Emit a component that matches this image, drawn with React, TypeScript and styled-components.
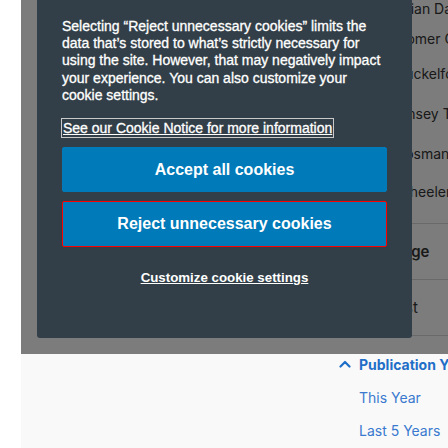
import React from "react";
import styled, { createGlobalStyle } from "styled-components";

const GlobalStyle = createGlobalStyle`
  html, body { margin: 0; padding: 0; }
  body { font-family: Inter, "Noto Sans", sans-serif; background: #ffffff; }
`;

const Page = styled.div`
  display: flex;
  width: 448px;
  height: 448px;
  overflow: hidden;
  background: #ffffff;
`;

const Gutter = styled.div`
  width: 21px;
  flex: none;
`;

const Main = styled.div`
  position: relative;
  flex: 1;
  display: flex;
  justify-content: flex-end;
  background: #f9f9f9;
`;

const Sidebar = styled.div`
  width: 109px;
  flex: none;
  display: flex;
  flex-direction: column;
`;

const NameList = styled.ul`
  list-style: none;
  margin: 0;
  padding: 0 0 0 57px;
  height: 223px;
  overflow: hidden;
`;

const Name = styled.li<{ $top: number }>`
  margin-top: ${(p) => p.$top}px;
  font-size: 14px;
  line-height: 17px;
  color: #333333;
  white-space: nowrap;
`;

const Row = styled.div<{ $bold?: boolean }>`
  height: 55px;
  border-top: 1px solid #d2d2d2;
  display: flex;
  align-items: center;
  padding-left: 54px;
  font-size: 15px;
  font-weight: ${(p) => (p.$bold ? 600 : 400)};
  color: #333333;
  white-space: nowrap;
`;

const LastRow = styled.div`
  height: 19px;
  border-top: 1px solid #d2d2d2;
`;

const FacetHeader = styled.div`
  display: flex;
  align-items: center;
  gap: 8px;
  height: 18px;
  font-size: 14px;
  font-weight: 700;
  color: #1f6fc8;
  white-space: nowrap;
  svg { flex: none; }
`;

const FacetItem = styled.div`
  padding-left: 20px;
  margin-top: 16px;
  font-size: 14px;
  line-height: 17px;
  color: #3a79cf;
  white-space: nowrap;
`;

const Overlay = styled.div`
  position: absolute;
  top: 0;
  left: 0;
  right: 0;
  height: 354px;
  background: rgba(0, 0, 0, 0.5);
  padding-left: 16px;
  box-sizing: border-box;
`;

const Dialog = styled.div`
  width: 375px;
  height: 338px;
  box-sizing: border-box;
  background: #333f48;
  border-radius: 0 0 3px 3px;
  padding: 18px 25px 0;
  display: flex;
  flex-direction: column;
  align-items: stretch;
  font-family: "Liberation Sans", Arial, sans-serif;
`;

const Text = styled.p`
  margin: 0;
  font-size: 14px;
  line-height: 17.2px;
  color: #ffffff;
  -webkit-text-stroke: 0.3px #ffffff;
`;

const NoticeLink = styled.a`
  align-self: flex-start;
  margin-top: 14px;
  margin-left: -1px;
  padding: 0 1px;
  border: 1px solid #c9c9c9;
  font-size: 14px;
  line-height: 18px;
  color: #ffffff;
  -webkit-text-stroke: 0.3px #ffffff;
  text-decoration: underline;
  white-space: nowrap;
`;

const Button = styled.button<{ $focused?: boolean }>`
  height: ${(p) => (p.$focused ? 46 : 45)}px;
  margin-top: 9px;
  border: 1px solid ${(p) => (p.$focused ? "#ff0000" : "#007ab8")};
  border-radius: 2px;
  background: #007ab8;
  color: #ffffff;
  font-family: "Liberation Sans", Arial, sans-serif;
  font-size: 16px;
  font-weight: 700;
  cursor: pointer;
`;

const SettingsLink = styled.a`
  align-self: center;
  margin-top: 23px;
  font-size: 13.3px;
  font-weight: 700;
  line-height: 16px;
  color: #ffffff;
  text-decoration: underline;
`;

const Chevron = () => (
  <svg width="12" height="8" viewBox="0 0 12 8" fill="none">
    <polyline points="1.5,6.5 6,2 10.5,6.5" stroke="#1f6fc8" strokeWidth="2.2" strokeLinecap="round" strokeLinejoin="round" />
  </svg>
);

const names: [string, number][] = [
  ["Brian Davis", 0],
  ["Homer Clark", 13],
  ["Buckelford", 18],
  ["Linsey Tate", 23],
  ["Bosman", 23],
  ["Wheeler Tan", 21],
];

export default function App() {
  return (
    <>
      <GlobalStyle />
      <Page>
        <Gutter />
        <Main>
          <Sidebar>
            <NameList>
              {names.map(([n, t]) => (
                <Name key={n} $top={t}>
                  {n}
                </Name>
              ))}
            </NameList>
            <Row $bold>Page</Row>
            <Row>List</Row>
            <LastRow />
            <FacetHeader>
              <Chevron />
              Publication Year
            </FacetHeader>
            <FacetItem>This Year</FacetItem>
            <FacetItem>Last 5 Years</FacetItem>
          </Sidebar>
          <Overlay>
            <Dialog role="dialog">
              <Text>
                Selecting “Reject unnecessary cookies” limits the data that’s stored to what’s strictly necessary for
                using the site. However, that may negatively impact your experience. You can also customize your
                cookie settings.
              </Text>
              <NoticeLink href="#">See our Cookie Notice for more information</NoticeLink>
              <Button>Accept all cookies</Button>
              <Button $focused>Reject unnecessary cookies</Button>
              <SettingsLink href="#">Customize cookie settings</SettingsLink>
            </Dialog>
          </Overlay>
        </Main>
      </Page>
    </>
  );
}
